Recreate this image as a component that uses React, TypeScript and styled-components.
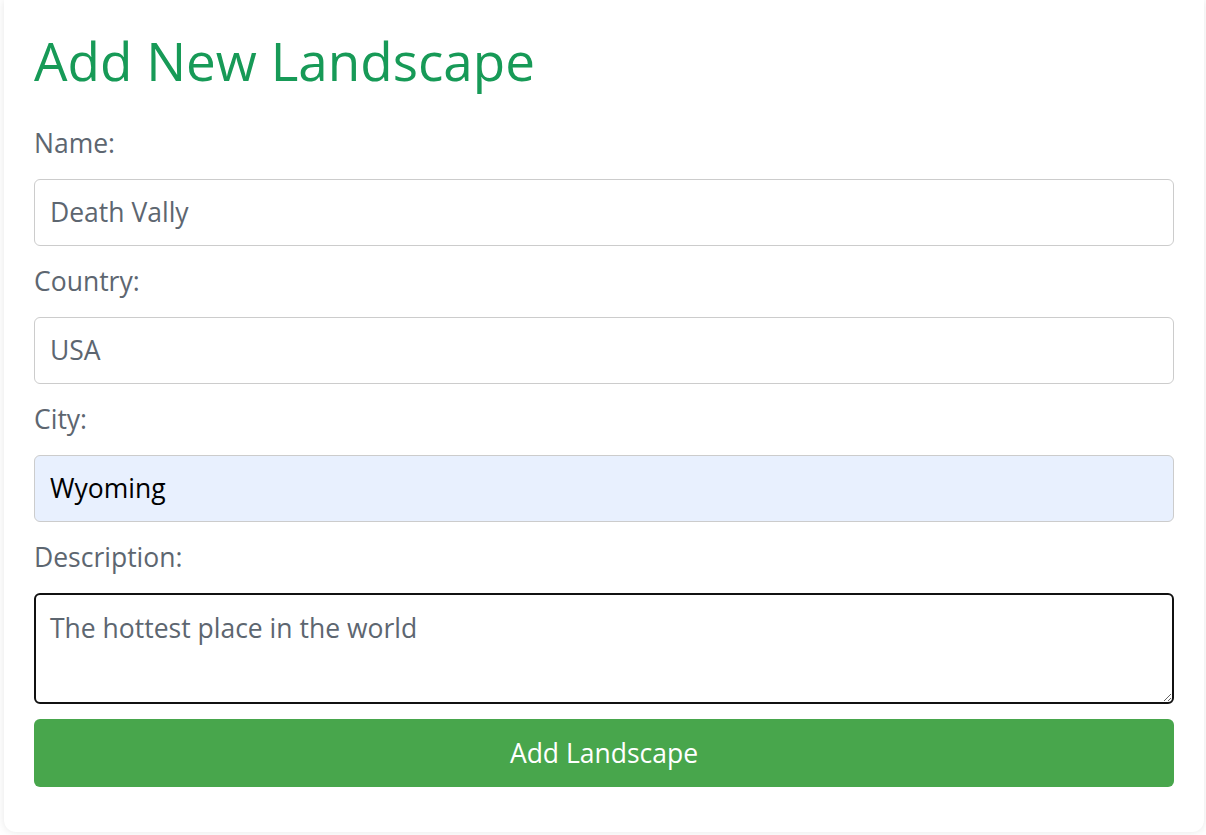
import React from 'react';
import styled, { createGlobalStyle } from 'styled-components';

const GlobalStyle = createGlobalStyle`
  body {
    margin: 0;
    background: #ffffff;
    font-family: 'Open Sans', 'Noto Sans', sans-serif;
  }
`;

const App: React.FC = () => {
  return (
    <>
      <GlobalStyle />
      <Card>
        <Title>Add New Landscape</Title>
        <Form onSubmit={(e) => e.preventDefault()}>
          <Label htmlFor="name">Name:</Label>
          <Input id="name" defaultValue="Death Vally" />
          <Label htmlFor="country">Country:</Label>
          <Input id="country" defaultValue="USA" />
          <Label htmlFor="city">City:</Label>
          <Input id="city" defaultValue="Wyoming" $autofilled />
          <Label htmlFor="description">Description:</Label>
          <TextArea
            id="description"
            defaultValue="The hottest place in the world"
            $focused
          />
          <SubmitButton type="submit">Add Landscape</SubmitButton>
        </Form>
      </Card>
    </>
  );
};

export default App;

const Card = styled.div`
  box-sizing: border-box;
  margin: 0 2px 4px 4px;
  padding: 26px 30px 45px;
  background: #ffffff;
  border-radius: 0 0 12px 12px;
  box-shadow: 0 0 8px rgba(0, 0, 0, 0.1);
`;

const Title = styled.h1`
  margin: 0 0 29px;
  font-size: 53px;
  line-height: 70px;
  font-weight: 400;
  color: #179a57;
`;

const Form = styled.form`
  display: flex;
  flex-direction: column;
`;

const Label = styled.label`
  margin: 2px 0 18.5px;
  font-size: 26.5px;
  line-height: 33px;
  color: #5d6670;
`;

const Input = styled.input<{ $autofilled?: boolean }>`
  box-sizing: border-box;
  width: 100%;
  height: 67px;
  margin: 0 0 17.5px;
  padding: 0 15px;
  border: 1px solid #cccccc;
  border-radius: 6px;
  font-family: inherit;
  font-size: 26.5px;
  color: ${({ $autofilled }) => ($autofilled ? '#000000' : '#5d6670')};
  background: ${({ $autofilled }) => ($autofilled ? '#e8f0fe' : '#ffffff')};
  outline: none;
`;

const TextArea = styled.textarea<{ $focused?: boolean }>`
  box-sizing: border-box;
  width: 100%;
  height: 111px;
  margin: 0 0 15px;
  padding: 15px 14px;
  border: ${({ $focused }) => ($focused ? '2px solid #111111' : '1px solid #cccccc')};
  border-radius: 6px;
  font-family: inherit;
  font-size: 26.5px;
  color: #5d6670;
  outline: none;
`;

const SubmitButton = styled.button`
  height: 68px;
  border: none;
  border-radius: 6px;
  background: #48a64c;
  color: #ffffff;
  font-family: inherit;
  font-size: 26.5px;
  cursor: pointer;
`;
